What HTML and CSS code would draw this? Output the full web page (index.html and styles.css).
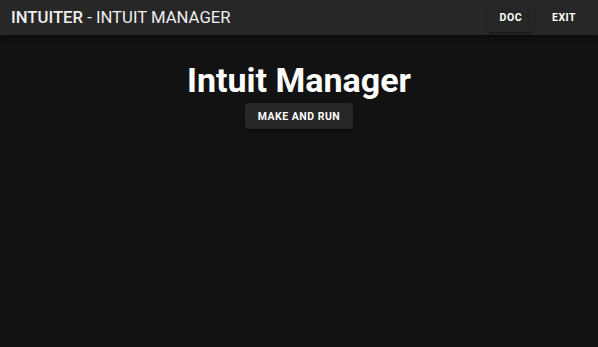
FILE: index.html
```html
<!DOCTYPE html>
<html>
<head>
	<title>Intuiter - Intuit Manager</title>
	<link rel="stylesheet" href="styles.css">
</head>
<body>
<header class="bar">
  <div class="title"><b>INTUITER</b> - INTUIT MANAGER</div>
  <div class="actions">
    <button class="btn raised">DOC</button>
    <button class="btn">EXIT</button>
  </div>
</header>
<main class="main">
  <h1>Intuit Manager</h1>
  <button class="btn raised run">MAKE AND RUN</button>
</main>
</body>
</html>
```

FILE: styles.css
```css
body,div,h1{margin:0;padding:0;}
body{
  background: #121212;
  color: #fff;
  font-family: Roboto, "Liberation Sans", sans-serif;
  height: 347px;
  overflow: hidden;
}
.bar{
  display: flex;
  align-items: center;
  justify-content: space-between;
  height: 35px;
  padding: 0 0 0 11px;
  background: #272727;
  box-shadow: 0 2px 4px -1px rgba(0,0,0,0.2), 0 4px 5px 0 rgba(0,0,0,0.14), 0 1px 10px 0 rgba(0,0,0,0.12);
}
.title{
  font-size: 16.7px;
  font-weight: 400;
  color: #eee;
}
.title b{
  font-weight: 500;
}
.actions{
  display: flex;
  align-items: center;
  gap: 6px;
  padding-right: 10px;
}
.btn{
  font-family: inherit;
  font-size: 10.5px;
  font-weight: 700;
  letter-spacing: 0.5px;
  color: #fff;
  background: transparent;
  border: 0;
  border-radius: 3px;
  padding: 0 12px;
  height: 28px;
}
.raised{
  background: #262626;
  box-shadow: 0 3px 1px -2px rgba(0,0,0,0.2), 0 2px 2px 0 rgba(0,0,0,0.14), 0 1px 5px 0 rgba(0,0,0,0.12);
}
.main{
  display: flex;
  flex-direction: column;
  align-items: center;
  padding-top: 23px;
}
h1{
  font-size: 34px;
  font-weight: 700;
  line-height: 44px;
}
.run{
  margin-top: 1px;
  height: 26px;
  padding: 0 13px;
}
```
